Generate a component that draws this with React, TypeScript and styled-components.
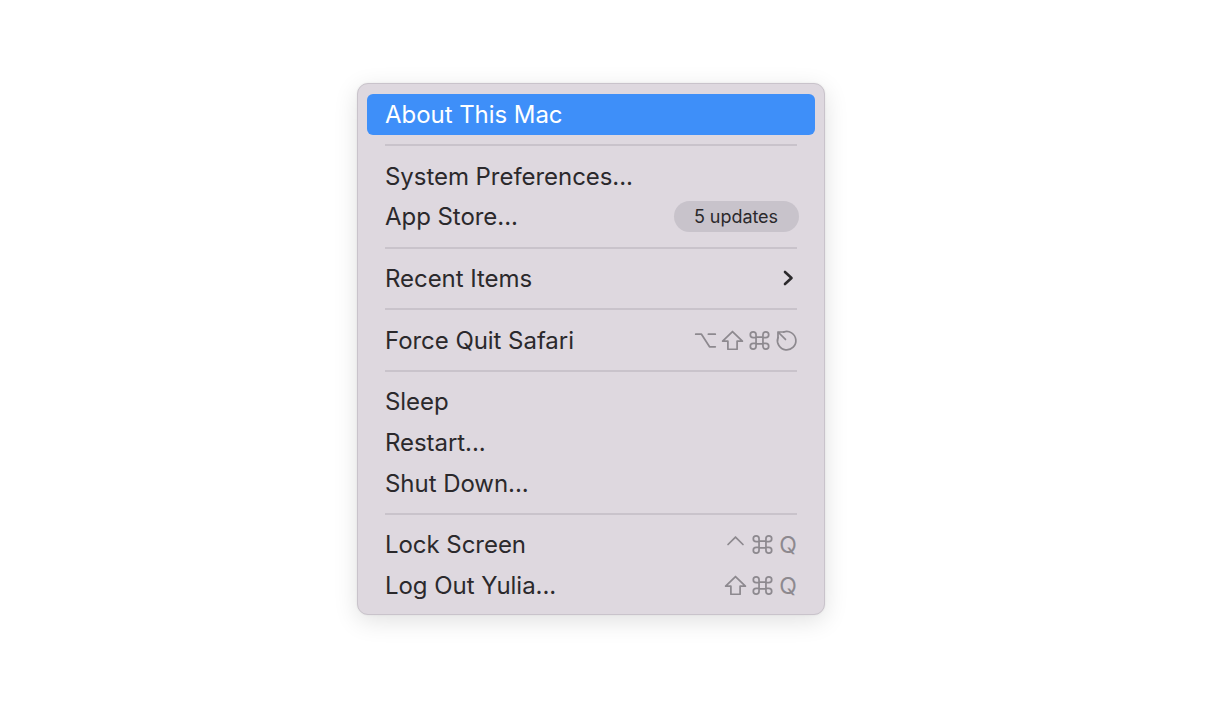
import React from "react";
import styled, { createGlobalStyle } from "styled-components";

const Global = createGlobalStyle`
  html, body { margin: 0; padding: 0; background: #ffffff; }
  body { font-family: Inter, "Noto Sans", "Liberation Sans", sans-serif; }
`;

const Page = styled.div`
  width: 1216px;
  height: 727px;
  display: flex;
  justify-content: flex-start;
  align-items: flex-start;
  padding: 83px 0 0 357px;
  box-sizing: border-box;
`;

const Menu = styled.div`
  width: 468px;
  box-sizing: border-box;
  background: #ded8df;
  border: 1px solid #c9c3cb;
  border-radius: 11px;
  padding: 10px 9px 8px;
  box-shadow: 0 6px 24px rgba(0, 0, 0, 0.12), 0 0 2px rgba(0, 0, 0, 0.08);
  display: flex;
  flex-direction: column;
`;

const Row = styled.div<{ $active?: boolean }>`
  height: 40.7px;
  display: flex;
  align-items: center;
  justify-content: space-between;
  padding: 0 17px 0 18px;
  border-radius: 6px;
  font-size: 24px;
  letter-spacing: -0.05px;
  color: ${(p) => (p.$active ? "#ffffff" : "#2b292c")};
  background: ${(p) => (p.$active ? "#3e8ff9" : "transparent")};
`;

const Separator = styled.div`
  height: 21px;
  display: flex;
  align-items: center;
  padding: 0 18px;
  &::after {
    content: "";
    flex: 1;
    height: 2px;
    background: #c9c3cb;
  }
`;

const Badge = styled.span`
  height: 31px;
  padding: 0 21px 0 20px;
  border-radius: 16px;
  background: #c8c3cb;
  color: #2b292c;
  font-size: 18px;
  display: flex;
  align-items: center;
  margin-right: -1px;
`;

const Shortcut = styled.span`
  display: flex;
  align-items: center;
  gap: 4px;
  color: #8d898f;
`;

const KeyLetter = styled.span`
  font-size: 23px;
  width: 20px;
  text-align: center;
  color: #8d898f;
`;

const Icon = styled.svg`
  display: block;
  width: 23px;
  height: 23px;
  fill: none;
  stroke: #8d898f;
  stroke-width: 1.5;
  stroke-linecap: round;
  stroke-linejoin: round;
`;

const Chev = styled.svg`
  display: block;
  width: 14px;
  height: 20px;
  fill: none;
  stroke: #2b292c;
  stroke-width: 2.6;
  stroke-linecap: round;
  stroke-linejoin: round;
  margin-right: 3px;
`;

const OptionKey = () => (
  <Icon viewBox="0 0 20 20">
    <path d="M1.5 4.5h5l7 11h5M12.5 4.5h6" />
  </Icon>
);
const ShiftKey = () => (
  <Icon viewBox="0 0 20 20">
    <path d="M10 2.2 1.4 10.6h4.6v7h8v-7h4.6z" />
  </Icon>
);
const CmdKey = () => (
  <Icon viewBox="0 0 20 20">
    <path d="M7 7h6v6H7zM7 7V5a2.5 2.5 0 1 0-2.5 2.5H7M13 7V5a2.5 2.5 0 1 1 2.5 2.5H13M7 13v2a2.5 2.5 0 1 1-2.5-2.5H7M13 13v2a2.5 2.5 0 1 0 2.5-2.5H13" />
  </Icon>
);
const EscKey = () => (
  <Icon viewBox="0 0 20 20">
    <path d="M7.5 2.6A8 8 0 1 1 2.6 7.5" />
    <path d="M2.6 2.6l6.5 6.5M2.6 2.6v5M2.6 2.6h5" />
  </Icon>
);
const CtrlKey = () => (
  <Icon viewBox="0 0 20 20">
    <path d="M3.5 10 10 3.5l6.5 6.5" />
  </Icon>
);

export default function App() {
  return (
    <>
      <Global />
      <Page>
        <Menu>
          <Row $active>About This Mac</Row>
          <Separator />
          <Row>System Preferences...</Row>
          <Row>
            App Store...
            <Badge>5 updates</Badge>
          </Row>
          <Separator />
          <Row>
            Recent Items
            <Chev viewBox="0 0 14 20">
              <path d="M4 4l6.5 6L4 16" />
            </Chev>
          </Row>
          <Separator />
          <Row>
            Force Quit Safari
            <Shortcut>
              <OptionKey />
              <ShiftKey />
              <CmdKey />
              <EscKey />
            </Shortcut>
          </Row>
          <Separator />
          <Row>Sleep</Row>
          <Row>Restart...</Row>
          <Row>Shut Down...</Row>
          <Separator />
          <Row>
            Lock Screen
            <Shortcut>
              <CtrlKey />
              <CmdKey />
              <KeyLetter>Q</KeyLetter>
            </Shortcut>
          </Row>
          <Row>
            Log Out Yulia...
            <Shortcut>
              <ShiftKey />
              <CmdKey />
              <KeyLetter>Q</KeyLetter>
            </Shortcut>
          </Row>
        </Menu>
      </Page>
    </>
  );
}
